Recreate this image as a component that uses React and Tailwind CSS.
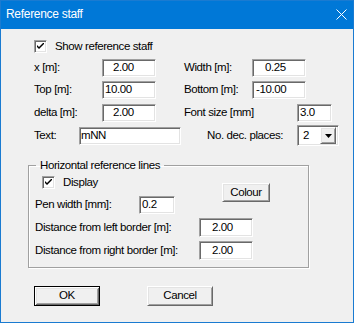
import React from "react";

const sunken =
  "bg-white border border-t-[#a0a0a0] border-l-[#a0a0a0] border-r-white border-b-white shadow-[inset_1px_1px_0_#696969,inset_-1px_-1px_0_#e3e3e3]";
const raised =
  "bg-[#f0f0f0] border border-t-white border-l-white border-r-[#696969] border-b-[#696969] shadow-[inset_1px_1px_0_#e3e3e3,inset_-1px_-1px_0_#a0a0a0]";

function Field({ className, value }) {
  return (
    <div className={`${sunken} h-[18px] flex items-center leading-none shrink-0 ${className}`}>
      <span>{value}</span>
    </div>
  );
}

function Check() {
  return (
    <div className={`${sunken} w-[13px] h-[13px] shrink-0 flex items-center justify-center`}>
      <svg width="7" height="7" viewBox="0 0 7 7">
        <path d="M0 2 L0 4 L2 6 L7 1 L7 -1 L2 4 Z" fill="#000" />
      </svg>
    </div>
  );
}

function Label({ className, children }) {
  return <div className={`shrink-0 whitespace-nowrap leading-none ${className}`}>{children}</div>;
}

export default function App() {
  return (
    <div className="w-[358px] h-[324px] bg-white font-['Liberation_Sans',Arial,sans-serif] text-[11.5px] tracking-[-0.4px] text-black">
      <div className="w-[354px] h-[323px] border border-[#1a7bd1] bg-[#f0f0f0] flex flex-col">
        <div className="h-[28px] bg-[#0078d7] flex items-center justify-between pl-[5px] pb-[2px] text-white text-[12px] tracking-[-0.3px]">
          <span>Reference staff</span>
          <svg width="11" height="11" viewBox="0 0 11 11" className="mr-[6px] mt-[1px]">
            <path d="M0.5 0.5 L10.5 10.5 M10.5 0.5 L0.5 10.5" stroke="#fff" strokeWidth="1" />
          </svg>
        </div>

        <div className="flex flex-col pl-[27px]">
          <div className="flex flex-col pl-[6px]">
            <div className="mt-[11px] flex items-center gap-[8px]">
              <Check />
              <span className="leading-none">Show reference staff</span>
            </div>

            <div className="mt-[6px] flex items-center h-[18px]">
              <Label className="w-[68px]">x [m]:</Label>
              <Field className="w-[54px] pl-[10px]" value="2.00" />
              <Label className="ml-[28px] w-[68px]">Width [m]:</Label>
              <Field className="w-[54px] pl-[12px]" value="0.25" />
            </div>

            <div className="mt-[4px] flex items-center h-[18px]">
              <Label className="w-[68px]">Top [m]:</Label>
              <Field className="w-[54px] pl-[2px]" value="10.00" />
              <Label className="ml-[28px] w-[68px]">Bottom [m]:</Label>
              <Field className="w-[54px] pl-[3px]" value="-10.00" />
            </div>

            <div className="mt-[5px] flex items-center h-[18px]">
              <Label className="w-[68px]">delta [m]:</Label>
              <Field className="w-[54px] pl-[10px]" value="2.00" />
              <Label className="ml-[28px] w-[113px]">Font size [mm]</Label>
              <Field className="w-[35px] pl-[2px]" value="3.0" />
            </div>

            <div className="mt-[3px] flex items-center h-[21px]">
              <Label className="w-[45px]">Text:</Label>
              <Field className="w-[102px] pl-[1px]" value="mNN" />
              <Label className="ml-[26px] w-[90px]">No. dec. places:</Label>
              <div className={`${sunken} w-[42px] h-[21px] shrink-0 flex items-center justify-between p-[2px]`}>
                <span className="pl-[3px] leading-none">2</span>
                <div className={`${raised} w-[16px] h-[17px] flex items-center justify-center`}>
                  <svg width="7" height="4" viewBox="0 0 7 4">
                    <path d="M0 0 L7 0 L3.5 4 Z" fill="#000" />
                  </svg>
                </div>
              </div>
            </div>
          </div>

          <fieldset className="mt-[12px] w-[281px] border border-[#a0a0a0] shadow-[inset_1px_1px_0_white,1px_1px_0_white] pb-[7px]">
            <legend className="ml-[7px] px-[4px] leading-[14px]">Horizontal reference lines</legend>
            <div className="mt-[4px] flex pl-[6px]">
              <div className="w-[140px] flex flex-col">
                <div className="pl-[7px] flex items-center gap-[8px]">
                  <Check />
                  <span className="leading-none">Display</span>
                </div>
                <div className="mt-[7px] flex items-center h-[18px]">
                  <Label className="w-[104px]">Pen width [mm]:</Label>
                  <Field className="w-[36px] pl-[2px]" value="0.2" />
                </div>
              </div>
              <div className={`${raised} ml-[47px] mt-[7px] w-[48px] h-[19px] flex items-center justify-center leading-none`}>
                Colour
              </div>
            </div>
            <div className="mt-[4px] pl-[6px] flex items-center h-[19px]">
              <Label className="w-[164px]">Distance from left border [m]:</Label>
              <Field className="w-[54px] h-[19px] pl-[12px]" value="2.00" />
            </div>
            <div className="mt-[4px] pl-[6px] flex items-center h-[19px]">
              <Label className="w-[164px]">Distance from right border [m]:</Label>
              <Field className="w-[54px] h-[19px] pl-[12px]" value="2.00" />
            </div>
          </fieldset>

          <div className="mt-[18px] pl-[6px] flex">
            <div className="w-[66px] h-[20px] border border-[#000] shadow-[inset_1px_1px_0_white,inset_-1px_-1px_0_#696969,inset_2px_2px_0_#e3e3e3,inset_-2px_-2px_0_#a0a0a0] bg-[#f0f0f0] flex items-center justify-center leading-none">
              OK
            </div>
            <div className={`${raised} ml-[47px] w-[66px] h-[20px] flex items-center justify-center leading-none`}>
              Cancel
            </div>
          </div>
        </div>
      </div>
    </div>
  );
}
